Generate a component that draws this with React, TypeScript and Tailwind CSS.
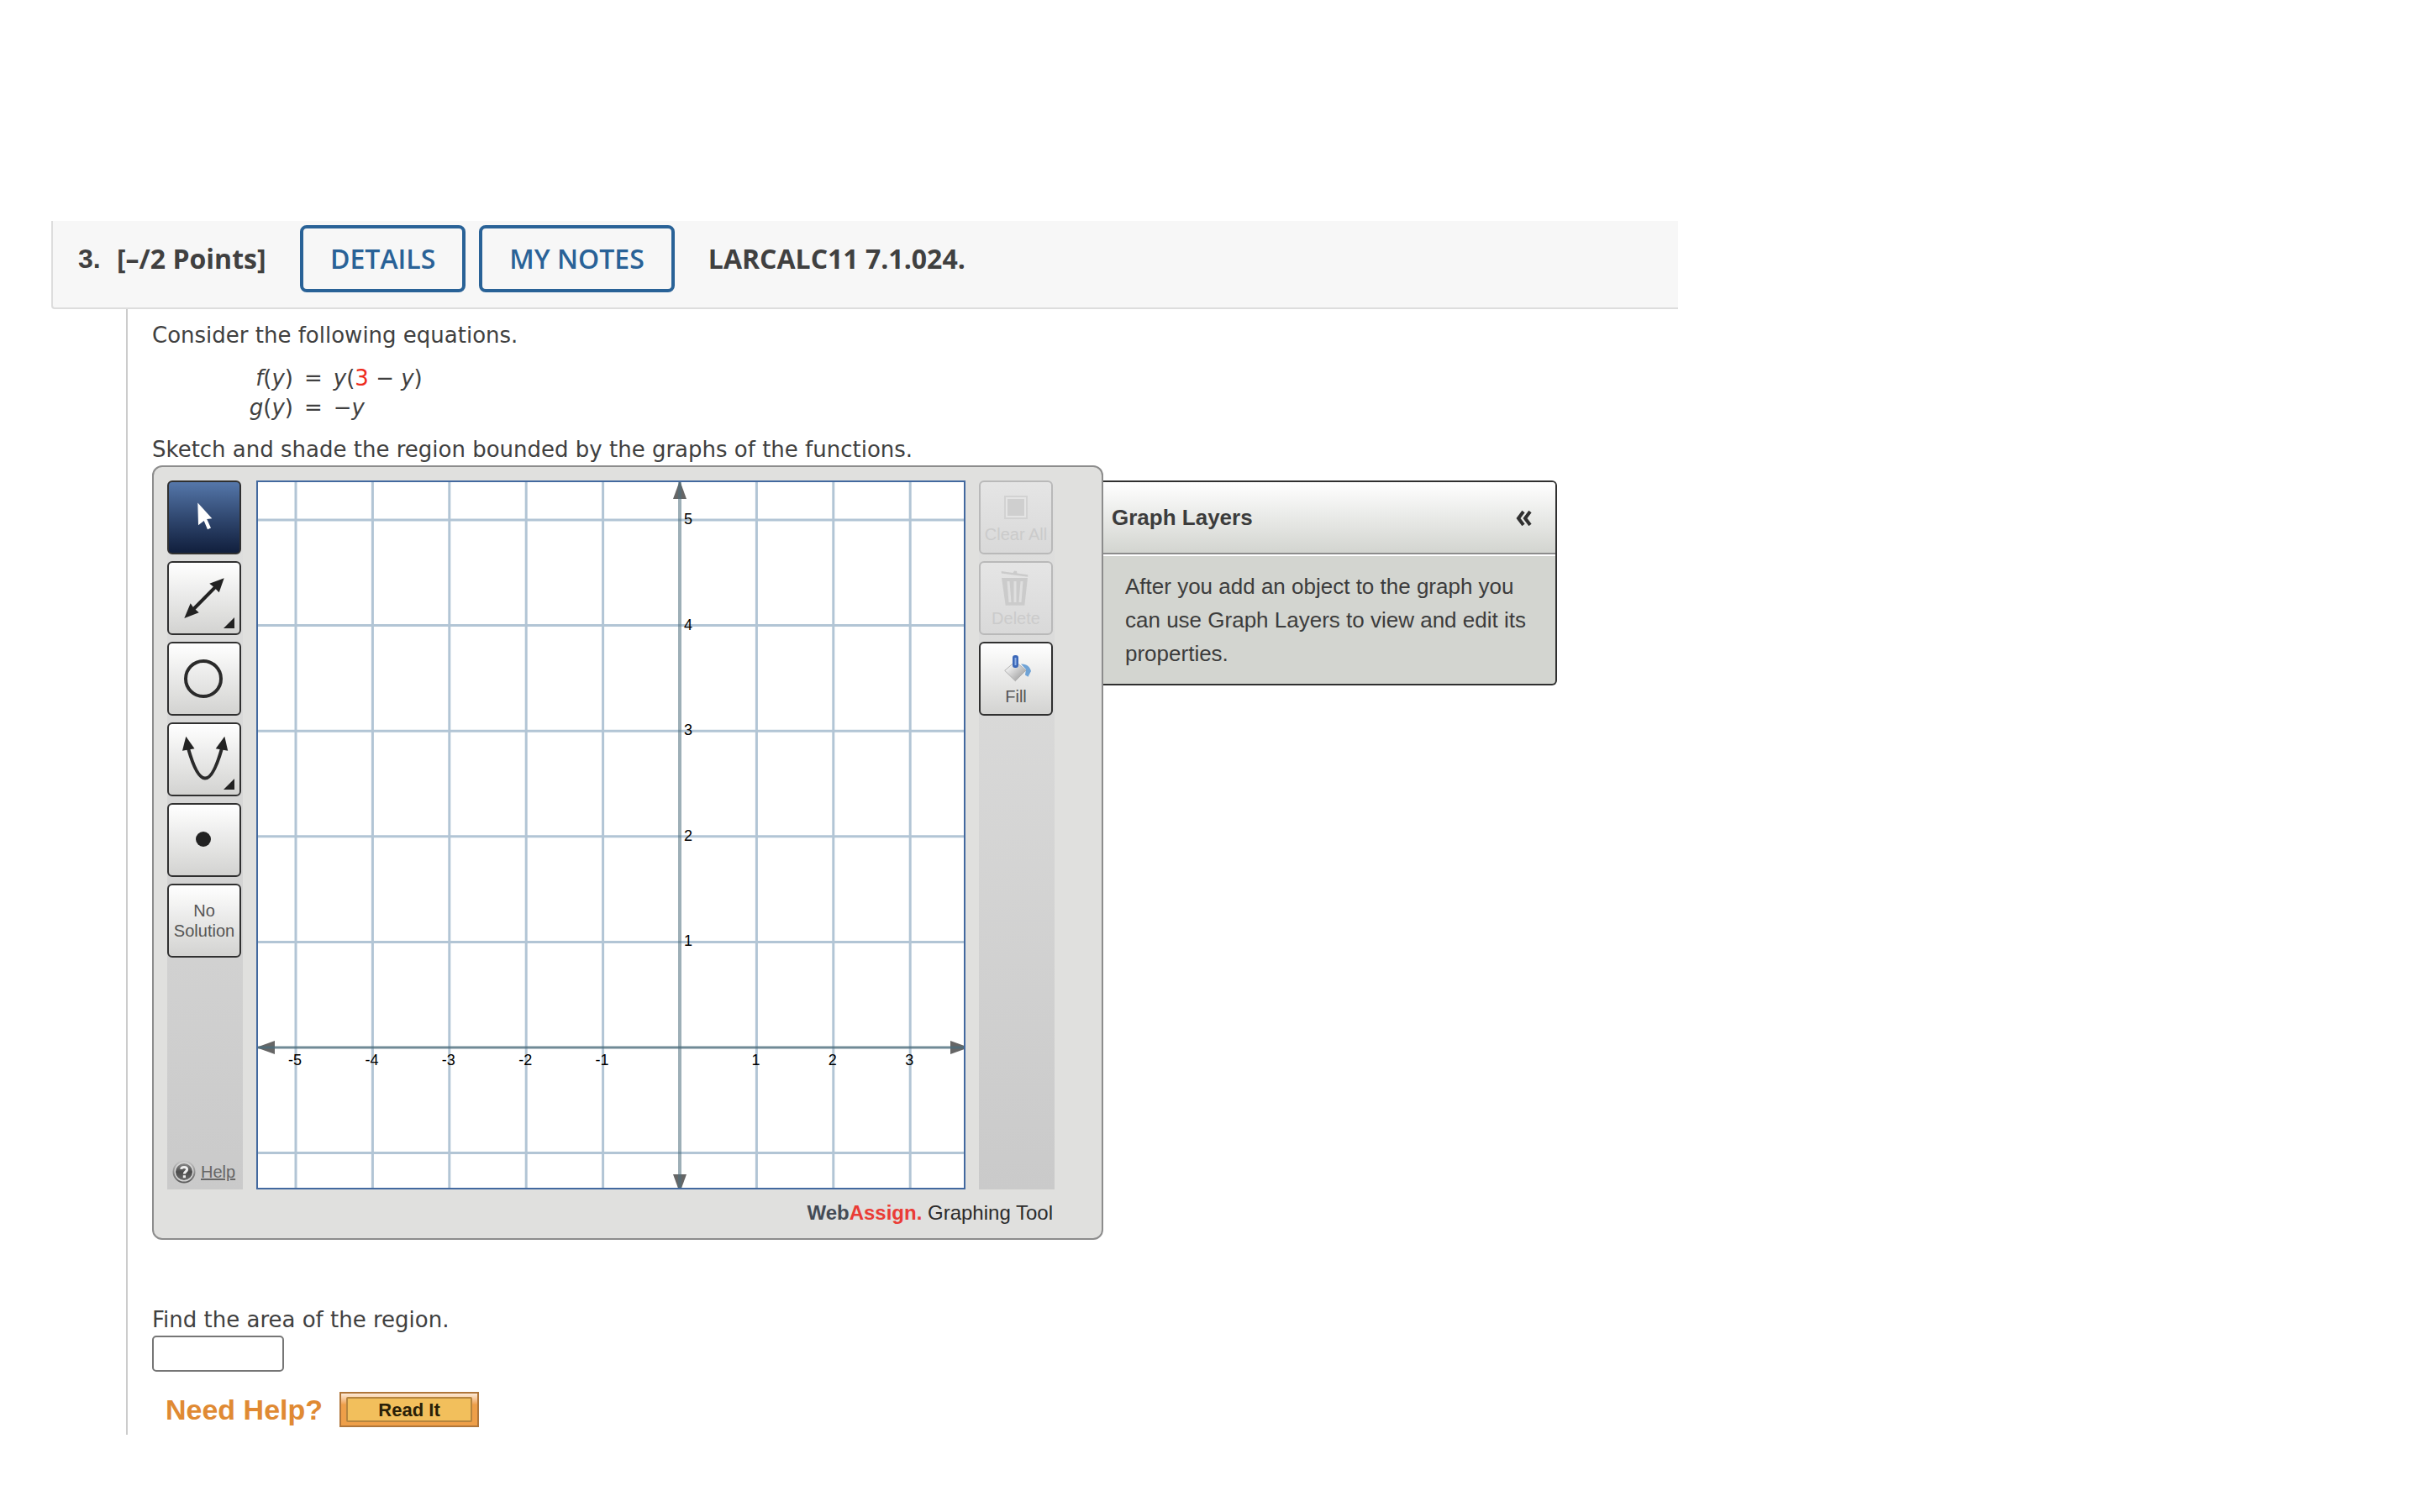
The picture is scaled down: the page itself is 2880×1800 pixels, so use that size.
import type { ReactNode } from "react";

const xTicks = [-5, -4, -3, -2, -1, 1, 2, 3];
const yTicks = [5, 4, 3, 2, 1, -1];

// graph units to pixels inside the 840 x 840 plot
const toX = (x: number) => 502 + x * 91.4;
const toY = (y: number) => 673 - y * 125.6;

const Header = () => {
    return (
        <header className="flex max-w-[1936px] items-start rounded-bl border-b-2 border-l-2 border-[#ddd] bg-[#f7f7f7] pt-[5px] pb-[18px] pl-[30px] font-['Open_Sans',sans-serif] text-[32px] leading-[80px] text-[#404040]">
            <h2 className="flex font-bold">
                <span className="w-[46px] font-['Liberation_Sans',sans-serif]">3.</span>
                <span className="w-[218px]">[–/2 Points]</span>
            </h2>
            <div className="flex gap-4 font-semibold text-[#296297]">
                <button className="h-20 rounded-lg border-4 border-[#296297] px-8 leading-[72px]">DETAILS</button>
                <button className="h-20 rounded-lg border-4 border-[#296297] px-8 leading-[72px]">MY NOTES</button>
            </div>
            <span className="ml-10 font-bold">LARCALC11 7.1.024.</span>
        </header>
    );
};

const Equations = () => {
    return (
        <div className="mt-[17px] grid grid-cols-[168px_auto_1fr] gap-x-[13px] leading-[35px]">
            <span className="text-right"><i>f</i>(<i>y</i>)</span>
            <span>=</span>
            <span><i>y</i>(<span className="text-[#ee2b1c]">3</span> − <i>y</i>)</span>
            <span className="text-right"><i>g</i>(<i>y</i>)</span>
            <span>=</span>
            <span>−<i>y</i></span>
        </div>
    );
};

type ToolProps = { label: string; active?: boolean; disabled?: boolean; children: ReactNode };

const Tool = ({ label, active, disabled, children }: ToolProps) => {
    let look = "border-[#303030] from-white to-[#d3d3d1] text-[#555]";
    if (active) look = "border-[#303030] from-[#5577aa] to-[#111f3d] text-white";
    if (disabled) look = "border-[#b9b9b9] from-[#e5e5e5] to-[#d9d9d9] text-[#cbcbcb]";
    return (
        <button
            aria-label={label}
            disabled={disabled}
            className={`flex size-[88px] flex-col items-center rounded-md border-2 bg-linear-to-b text-[20px] ${look}`}
        >
            {children}
        </button>
    );
};

const Corner = () => <path d="M65 78 78 65V78Z" />;

const LeftTools = () => {
    return (
        <div className="flex w-[90px] shrink-0 flex-col gap-2 bg-linear-to-b from-[#e0e0df] to-[#cacaca]">
            <Tool label="Select" active>
                <svg viewBox="0 0 84 84" className="size-[84px]" fill="#fff">
                    <path d="M34.3 24.5 51.3 43.3 45.2 44 50 54.6 46 56.3 41.7 46 35 51.3Z" />
                </svg>
            </Tool>
            <Tool label="Line">
                <svg viewBox="0 0 84 84" className="size-[84px]" fill="#222">
                    <path d="M26 58.5 58 26" stroke="#222" strokeWidth="4" />
                    <path d="M65.7 18.3 48.3 24.7 53 28.5 55.5 31 59.7 35.3Z" />
                    <path d="M18.3 66 25.7 48.3 29 53 31.5 55.5 35.7 59.3Z" />
                    <Corner />
                </svg>
            </Tool>
            <Tool label="Circle">
                <svg viewBox="0 0 84 84" className="size-[84px]">
                    <circle cx="41" cy="42" r="21" fill="none" stroke="#2a2a2a" strokeWidth="4" />
                </svg>
            </Tool>
            <Tool label="Parabola">
                <svg viewBox="0 0 84 84" className="size-[84px]" fill="#222">
                    <path d="M23 29Q43 100 63 29" fill="none" stroke="#2a2a2a" strokeWidth="4" />
                    <path d="M20.3 14.7 16 31.7 30.5 29.3Z" />
                    <path d="M66.3 14.7 70.2 31.7 55.7 29.3Z" />
                    <Corner />
                </svg>
            </Tool>
            <Tool label="Point">
                <svg viewBox="0 0 84 84" className="size-[84px]">
                    <circle cx="41" cy="41" r="9" fill="#222" />
                </svg>
            </Tool>
            <Tool label="No Solution">
                <span className="mt-[18px] leading-6">No<br />Solution</span>
            </Tool>
            <a href="#" className="mt-auto mb-[7px] ml-1.5 flex items-center gap-1.5 text-[20px] leading-7 text-[#666]">
                <svg viewBox="0 0 28 28" className="size-7" fill="none">
                    <defs>
                        <linearGradient id="helpFill" x1="0" y1="0" x2="0" y2="1">
                            <stop offset="0" stopColor="#8c8c8c" />
                            <stop offset="0.5" stopColor="#4b4b4b" />
                            <stop offset="1" stopColor="#6a6a6a" />
                        </linearGradient>
                        <linearGradient id="helpRing" x1="0" y1="0" x2="0" y2="1">
                            <stop offset="0" stopColor="#c4c4c4" />
                            <stop offset="1" stopColor="#5c5c5c" />
                        </linearGradient>
                    </defs>
                    <circle cx="14" cy="14" r="12.5" fill="#d6d6d6" stroke="url(#helpRing)" strokeWidth="2" />
                    <circle cx="14" cy="14" r="10" fill="url(#helpFill)" />
                    <path d="M10.7 10.8C11 7.6 17.6 7.6 17.6 11.3 17.6 13.8 14.3 13.8 14.3 16.6" stroke="#eee" strokeWidth="3" />
                    <rect x="12.8" y="18.2" width="3.2" height="3" fill="#eee" />
                </svg>
                <span className="underline">Help</span>
            </a>
        </div>
    );
};

const RightTools = () => {
    return (
        <div className="flex w-[90px] shrink-0 flex-col gap-2 bg-linear-to-b from-[#e0e0df] to-[#cacaca]">
            <Tool label="Clear All" disabled>
                <svg viewBox="0 0 84 52" className="h-[52px] w-[84px] shrink-0">
                    <rect x="29" y="17" width="26" height="26" fill="#e4e4e4" stroke="#d2d2d2" strokeWidth="2" />
                    <rect x="32" y="20" width="20" height="20" fill="#cfcfcf" />
                </svg>
                <span className="leading-5 whitespace-nowrap">Clear All</span>
            </Tool>
            <Tool label="Delete" disabled>
                <svg viewBox="0 0 84 56" className="h-14 w-[84px] shrink-0" fill="#cbcbcb">
                    <path d="M24.7 10 38.5 12 40 9.5 43 10 43.5 12.5 56.3 14.2V16.7L24.7 12.5Z" />
                    <path d="M25 18H56L52.3 50.7H29.7Z" />
                    <path d="M33 22 35 47M41 22V47M49 22 47 47" stroke="#dfdfdf" strokeWidth="3" />
                </svg>
                <span className="leading-5">Delete</span>
            </Tool>
            <Tool label="Fill">
                <svg viewBox="0 0 84 53" className="h-[53px] w-[84px] shrink-0">
                    <defs>
                        <linearGradient id="bucket" x1="0" y1="0" x2="1" y2="1">
                            <stop offset="0.2" stopColor="#f4f4f4" />
                            <stop offset="1" stopColor="#8f8f8f" />
                        </linearGradient>
                    </defs>
                    <path d="M48 24.5C55 24 59 28 60 33L56.5 39.7 53 37.5 54 31Z" fill="#6fa3d6" />
                    <path d="M41.3 21.5 54 32 41.3 44.7 28.7 32.3Z" fill="url(#bucket)" stroke="#b0b0b0" />
                    <rect x="38" y="14" width="7" height="15" rx="3" fill="#3b67b8" />
                    <path d="M41.5 17V26" stroke="#8fb1e6" strokeWidth="2" />
                </svg>
                <span className="leading-5">Fill</span>
            </Tool>
        </div>
    );
};

const Graph = () => {
    return (
        <div className="size-[844px] shrink-0 border-2 border-[#43699f] bg-white">
            <svg viewBox="0 0 840 840" className="size-full font-['Liberation_Sans',sans-serif] text-[18px]">
                <g stroke="#b2c5d5" strokeWidth="3">
                    {xTicks.map((x) => <line key={x} x1={toX(x)} x2={toX(x)} y1="0" y2="840" />)}
                    {yTicks.map((y) => <line key={y} x1="0" x2="840" y1={toY(y)} y2={toY(y)} />)}
                </g>
                <g fill="#666">
                    <path d="M502 -2 510 20H494Z" />
                    <path d="M502 846 510 824H494Z" />
                    <path d="M-2 673 20 665V681Z" />
                    <path d="M846 673 824 665V681Z" />
                </g>
                <line x1="502" x2="502" y1="0" y2="840" stroke="#4c6d7c" strokeOpacity="0.55" strokeWidth="4" />
                <line x1="0" x2="840" y1="673" y2="673" stroke="#4c6d7c" strokeOpacity="0.8" strokeWidth="3" />
                <g textAnchor="middle">
                    {xTicks.map((x) => <text key={x} x={toX(x) - 1} y="694">{x}</text>)}
                </g>
                {yTicks.filter((y) => y > 0).map((y) => <text key={y} x="507" y={toY(y) + 5}>{y}</text>)}
            </svg>
        </div>
    );
};

const GraphLayers = () => {
    return (
        <section className="mt-[18px] w-[540px] rounded-r-md border-2 border-l-0 border-[#303030] bg-[#d3d5d0] font-['Liberation_Sans',sans-serif] text-[26px] text-[#3c3c3c]">
            <div className="flex h-[86px] items-center justify-between rounded-tr border-b-2 border-[#8c8c8c] bg-linear-to-b from-white to-[#d3d5d0] pr-7 pl-2.5">
                <h3 className="font-bold">Graph Layers</h3>
                <button aria-label="Collapse">
                    <svg viewBox="0 0 20 20" className="size-5" fill="none" stroke="#303030" strokeWidth="4">
                        <path d="M10 3 4 11 10 19M18 3 12 11 18 19" />
                    </svg>
                </button>
            </div>
            <p className="border-t-2 border-white pt-4 pr-8 pb-4 pl-[26px] leading-10">
                After you add an object to the graph you can use Graph Layers to view and edit its properties.
            </p>
        </section>
    );
};

const GraphingTool = () => {
    return (
        <div className="mt-0.5 flex items-start">
            <div className="rounded-xl border-2 border-[#8c8c8c] bg-[#e0e0de] pt-4 pr-14 pb-4 pl-4 font-['Liberation_Sans',sans-serif]">
                <div className="flex gap-4">
                    <LeftTools />
                    <Graph />
                    <RightTools />
                </div>
                <p className="mt-3.5 pr-0.5 text-right text-[24px] leading-7 text-[#2b2b2b]">
                    <b className="text-[#444b55]">Web</b><b className="text-[#ea3c36]">Assign.</b> Graphing Tool
                </p>
            </div>
            <GraphLayers />
        </div>
    );
};

const App = () => {
    return (
        <div className="min-h-screen bg-white pt-[263px] pl-[61px]">
            <Header />
            <main className="ml-[89px] border-l-2 border-[#ccc] pt-3.5 pb-[9px] pl-[29px] font-['DejaVu_Sans',Verdana,sans-serif] text-[26px] leading-[34px] text-[#404040]">
                <p>Consider the following equations.</p>
                <Equations />
                <p className="mt-[15px]">Sketch and shade the region bounded by the graphs of the functions.</p>
                <GraphingTool />
                <label htmlFor="area" className="mt-[78px] block">Find the area of the region.</label>
                <input id="area" type="text" className="mt-0.5 block h-[43px] w-[157px] rounded-[5px] border-2 border-[#767676] bg-white px-2" />
                <div className="mt-6 ml-4 flex items-center gap-5 font-['Liberation_Sans',sans-serif] font-bold">
                    <span className="text-[34px] leading-[38px] text-[#e08a33]">Need Help?</span>
                    <button className="h-[42px] w-[166px] border-2 border-[#b0763a] bg-linear-to-b from-[#fdebd8] to-[#ee9f49] to-35% px-1.5 py-1 text-[22px] text-[#2a1f08]">
                        <span className="block rounded-xs border-2 border-[#b5853f] bg-[#f2bf5c] pt-0.5 leading-6">Read It</span>
                    </button>
                </div>
            </main>
        </div>
    );
};

export default App;
